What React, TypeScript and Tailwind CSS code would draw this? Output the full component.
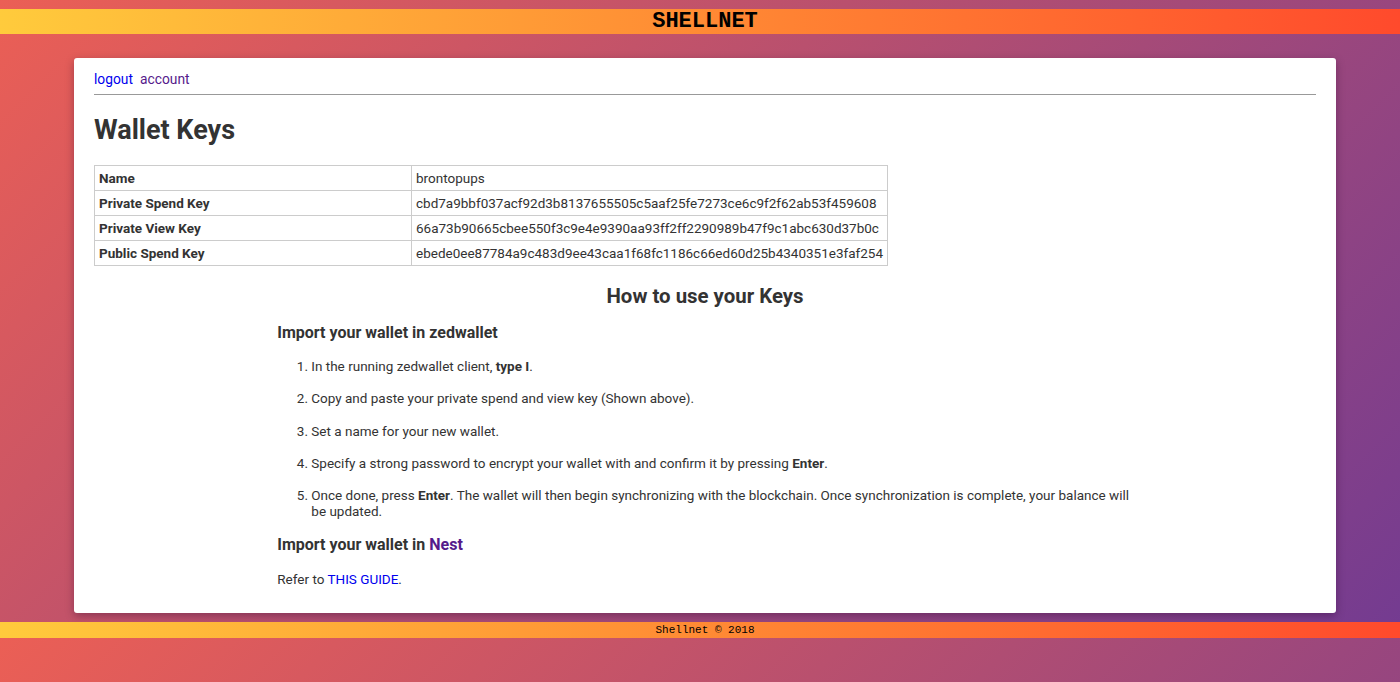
const keys = [
  { label: 'Name', value: 'brontopups' },
  {
    label: 'Private Spend Key',
    value: 'cbd7a9bbf037acf92d3b8137655505c5aaf25fe7273ce6c9f2f62ab53f459608',
  },
  {
    label: 'Private View Key',
    value: '66a73b90665cbee550f3c9e4e9390aa93ff2ff2290989b47f9c1abc630d37b0c',
  },
  {
    label: 'Public Spend Key',
    value: 'ebede0ee87784a9c483d9ee43caa1f68fc1186c66ed60d25b4340351e3faf254',
  },
]

const Bar = ({ children, className }: { children: React.ReactNode; className: string }) => (
  <div
    className={`w-full flex justify-center items-center pl-[10px] bg-[linear-gradient(to_right,#ffcb3c,#ff4a2c)] font-['Liberation_Mono',monospace] text-black ${className}`}
  >
    {children}
  </div>
)

const App = () => {
  return (
    <div className="min-h-[682px] w-full bg-[linear-gradient(135deg,#eb5f55,#733b91)] bg-[length:100%_638px] bg-repeat-y font-['Roboto',sans-serif] text-[13.5px] leading-[16.25px] text-[#333] pt-[9px]">
      <Bar className="h-[25px] text-[22px] font-bold leading-[25px]">SHELLNET</Bar>

      <div className="ml-[74px] mr-[64px] mt-[24px] bg-white rounded-[3px] shadow-[0_3px_8px_rgba(40,0,40,0.35)] px-[20px] pt-[12px] pb-[26px]">
        <nav className="h-[25px] flex gap-[7px] border-b border-[#999] leading-[18px] text-[13.8px]">
          <a href="#" className="text-[#0000ee]">logout</a>
          <a href="#" className="text-[#551a8b]">account</a>
        </nav>

        <h1 className="mt-[18px] h-[34px] leading-[34px] text-[27px] font-bold">Wallet Keys</h1>

        <table className="mt-[18px] border-collapse">
          <tbody>
            {keys.map((k) => (
              <tr key={k.label}>
                <td className="w-[317px] h-[25px] px-[4px] py-0 border border-[#ccc] font-bold">{k.label}</td>
                <td className="h-[25px] px-[4px] py-0 border border-[#ccc]">{k.value}</td>
              </tr>
            ))}
          </tbody>
        </table>

        <h2 className="mt-[18px] h-[24px] leading-[24px] text-center text-[20.4px] font-bold">
          How to use your Keys
        </h2>

        <div className="w-[70%] mx-auto">
          <h3 className="mt-[15px] h-[20px] leading-[20px] text-[16px] font-bold">
            Import your wallet in zedwallet
          </h3>
          <ol className="mt-[15px] list-decimal pl-[34px] flex flex-col gap-[16px]">
            <li>
              In the running zedwallet client, <b>type I</b>.
            </li>
            <li>Copy and paste your private spend and view key (Shown above).</li>
            <li>Set a name for your new wallet.</li>
            <li>
              Specify a strong password to encrypt your wallet with and confirm it by pressing <b>Enter</b>.
            </li>
            <li>
              Once done, press <b>Enter</b>. The wallet will then begin synchronizing with the blockchain. Once
              synchronization is complete, your balance will be updated.
            </li>
          </ol>
          <h3 className="mt-[15px] h-[20px] leading-[20px] text-[16px] font-bold">
            Import your wallet in <a href="#" className="text-[#551a8b]">Nest</a>
          </h3>
          <p className="mt-[16px]">
            Refer to <a href="#" className="text-[#0000ee]">THIS GUIDE</a>.
          </p>
        </div>
      </div>

      <Bar className="mt-[9px] h-[16px] text-[11px] leading-[16px]">Shellnet © 2018</Bar>
    </div>
  )
}

export default App
